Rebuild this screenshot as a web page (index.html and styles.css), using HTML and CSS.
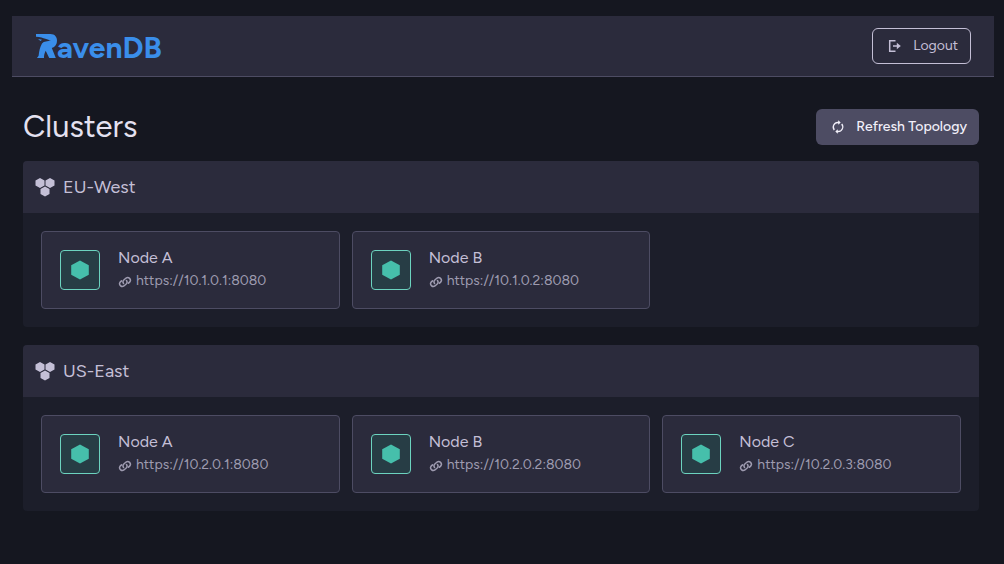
FILE: index.html
```html
<!DOCTYPE html>
<html lang="en">
<head>
<meta charset="utf-8">
<meta name="viewport" content="width=device-width, initial-scale=1">
<title>RavenDB Clusters</title>
<link rel="stylesheet" href="styles.css">
</head>
<body>
<svg class="defs" aria-hidden="true">
  <symbol id="i-hex" viewBox="0 0 20 20"><path d="M10 .5 18.800 5.300v9.400L10 19.500 1.200 14.700V5.300z"/></symbol>
  <symbol id="i-cluster" viewBox="0 0 20 20"><path d="M5 .9l4.500 2.500v5.200L5 11.100.5 8.600V3.400zM15 .9l4.500 2.500v5.200L15 11.100l-4.500-2.500V3.400zM10 9.400l4.500 2.500v5.200L10 19.600l-4.500-2.500v-5.200z"/></symbol>
  <symbol id="i-link" viewBox="0 0 24 24"><g fill="none" stroke="currentColor" stroke-width="2.600" stroke-linecap="round"><path d="M9.500 14.500a4.600 4.600 0 0 1 .5-6l3.800-3.300a4.700 4.700 0 0 1 6.500 6.600L18 14"/><path d="M14.500 9.500a4.600 4.600 0 0 1-.5 6l-3.800 3.300a4.700 4.700 0 0 1-6.500-6.600L6 10"/></g></symbol>
</svg>
<header class="topbar">
  <a class="logo" href="#" aria-label="RavenDB">
    <svg class="logo-mark" viewBox="0 0 21 24" aria-hidden="true"><path d="M0 0H14.500C18.700 0 21 2.800 21 6.800c0 3.700-1.800 6-5.200 7.300L19.800 24h-6.600l-3.500-7.300C8.600 18.800 7.800 21.500 8 24H1l1.600-2.200C3.200 16.500 4 12.800 6 9.400c2-2.200 5.500-2 9-3.100C11.500 6.200 8.500 3.400 0 2.700zM2 4.900l4 .8L4.500 6.900z"/></svg>
    <span class="logo-text">avenDB</span>
  </a>
  <button class="btn btn-outline" type="button">
    <svg class="btn-icon" viewBox="0 0 16 16" aria-hidden="true"><path fill="none" stroke="currentColor" stroke-width="1.500" d="M8.500 2.700H2.700v10.600h5.800M6 8h5"/><path d="M9.800 4.800 13.800 8l-4 3.200z"/></svg>
    Logout
  </button>
</header>
<main class="page">
  <div class="page-head">
    <h1>Clusters</h1>
    <button class="btn btn-solid" type="button">
      <svg class="btn-icon" viewBox="0 0 16 16" aria-hidden="true"><path fill="none" stroke="currentColor" stroke-width="1.300" d="M9 3.500H8A4.600 4.600 0 0 0 4.300 11M7 12.500h1A4.600 4.600 0 0 0 11.700 5"/><path d="M8.200 1.200 10.700 3.500 8.200 5.800zM7.800 10.200 5.300 12.500 7.800 14.800z"/></svg>
      Refresh Topology
    </button>
  </div>

  <section class="cluster">
    <h2><svg class="cluster-icon" aria-hidden="true"><use href="#i-cluster"/></svg>EU-West</h2>
    <div class="nodes">
      <article class="node"><span class="badge"><svg aria-hidden="true"><use href="#i-hex"/></svg></span><div class="info"><h3>Node A</h3><a href="https://10.1.0.1:8080"><svg aria-hidden="true"><use href="#i-link"/></svg>https://10.1.0.1:8080</a></div></article>
      <article class="node"><span class="badge"><svg aria-hidden="true"><use href="#i-hex"/></svg></span><div class="info"><h3>Node B</h3><a href="https://10.1.0.2:8080"><svg aria-hidden="true"><use href="#i-link"/></svg>https://10.1.0.2:8080</a></div></article>
    </div>
  </section>

  <section class="cluster">
    <h2><svg class="cluster-icon" aria-hidden="true"><use href="#i-cluster"/></svg>US-East</h2>
    <div class="nodes">
      <article class="node"><span class="badge"><svg aria-hidden="true"><use href="#i-hex"/></svg></span><div class="info"><h3>Node A</h3><a href="https://10.2.0.1:8080"><svg aria-hidden="true"><use href="#i-link"/></svg>https://10.2.0.1:8080</a></div></article>
      <article class="node"><span class="badge"><svg aria-hidden="true"><use href="#i-hex"/></svg></span><div class="info"><h3>Node B</h3><a href="https://10.2.0.2:8080"><svg aria-hidden="true"><use href="#i-link"/></svg>https://10.2.0.2:8080</a></div></article>
      <article class="node"><span class="badge"><svg aria-hidden="true"><use href="#i-hex"/></svg></span><div class="info"><h3>Node C</h3><a href="https://10.2.0.3:8080"><svg aria-hidden="true"><use href="#i-link"/></svg>https://10.2.0.3:8080</a></div></article>
    </div>
  </section>
</main>
</body>
</html>
```
FILE: styles.css
```css
* { box-sizing: border-box; }
body {
  margin: 0;
  padding: 16px 10px 16px 12px;
  background: #151720;
  color: #c4bfd6;
  font-family: Figtree, Inter, "Open Sans", sans-serif;
  font-size: 14px;
}
svg { fill: currentColor; flex: none; }
.defs { display: none; }
h1, h2, h3 { margin: 0; font-weight: 400; }
a { color: inherit; text-decoration: none; }

.topbar {
  display: flex;
  align-items: center;
  justify-content: space-between;
  padding: 12px 23px 12px 24px;
  background: #2b2b3c;
  border-bottom: 1px solid #4d4c63;
}
.logo { display: flex; align-items: center; color: #3a8eea; }
.logo-mark { width: 21px; height: 24px; }
.logo-text { padding-top: 4px; font-size: 30px; font-weight: 700; line-height: 30px; }

.btn {
  display: flex;
  align-items: center;
  gap: 10px;
  height: 36px;
  padding: 0 12px 0 14px;
  border: 1px solid transparent;
  border-radius: 6px;
  font: inherit;
  line-height: 20px;
}
.btn-icon { width: 16px; height: 16px; }
.btn-outline { background: transparent; border-color: #c4bfd6; color: #c4bfd6; }
.btn-solid { padding: 0 11px 0 13px; background: #4d4c63; color: #f2f0fa; font-weight: 500; }

.page { padding: 32px 15px 0 11px; }
.page-head {
  display: flex;
  align-items: center;
  justify-content: space-between;
  margin-bottom: 16px;
}
h1 { color: #e4e1f0; font-size: 31px; line-height: 36px; }

.cluster {
  margin-bottom: 18px;
  overflow: hidden;
  border-radius: 4px;
  background: #1c1e2a;
}
h2 {
  display: flex;
  align-items: center;
  gap: 8px;
  padding: 14px 12px;
  background: #2b2b3c;
  font-size: 18px;
  line-height: 24px;
}
.cluster-icon { width: 20px; height: 20px; }
.nodes {
  display: grid;
  grid-template-columns: repeat(3, 1fr);
  gap: 12px;
  padding: 18px;
}
.node {
  display: flex;
  align-items: center;
  gap: 18px;
  padding: 14px 18px;
  border: 1px solid #4d4c63;
  border-radius: 4px;
  background: #2b2b3c;
}
.badge {
  display: grid;
  place-items: center;
  width: 40px;
  height: 40px;
  border: 1px solid #6cd3bf;
  border-radius: 4px;
  background: #273d45;
  color: #46bfab;
}
.badge svg { width: 20px; height: 20px; }
.info { padding-bottom: 2px; }
h3 { font-size: 16px; line-height: 24px; }
.info a { display: flex; align-items: center; gap: 4px; color: #9e9bb0; line-height: 22px; }
.info a svg { width: 14px; height: 14px; margin-top: 2px; }
```
